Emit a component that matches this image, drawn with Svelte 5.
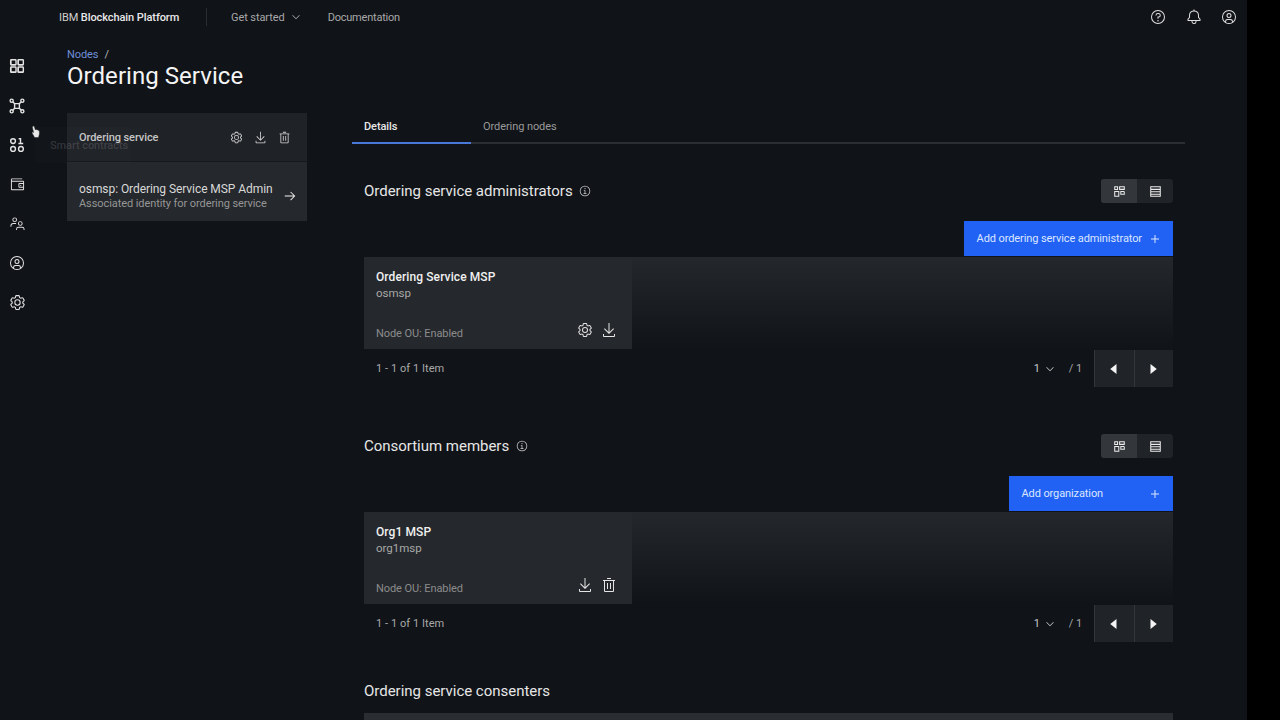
<script>
  const icons = {
    gear: ["M27,16.76c0-.25,0-.5,0-.76s0-.51,0-.77l1.92-1.68A2,2,0,0,0,29.3,11L26.94,7a2,2,0,0,0-1.73-1,2,2,0,0,0-.64.1l-2.43.82a11.35,11.35,0,0,0-1.31-.75l-.51-2.52a2,2,0,0,0-2-1.61H13.64a2,2,0,0,0-2,1.61l-.51,2.52a11.48,11.48,0,0,0-1.32.75L7.43,6.06A2,2,0,0,0,6.79,6,2,2,0,0,0,5.06,7L2.7,11a2,2,0,0,0,.41,2.51L5,15.24c0,.25,0,.5,0,.76s0,.51,0,.77L3.11,18.45A2,2,0,0,0,2.7,21L5.06,25a2,2,0,0,0,1.73,1,2,2,0,0,0,.64-.1l2.43-.82a11.35,11.35,0,0,0,1.31.75l.51,2.52a2,2,0,0,0,2,1.61h4.72a2,2,0,0,0,2-1.61l.51-2.52a11.48,11.48,0,0,0,1.32-.75l2.42.82a2,2,0,0,0,.64.1,2,2,0,0,0,1.73-1L29.3,21a2,2,0,0,0-.41-2.51ZM25.21,24l-3.43-1.16a8.86,8.86,0,0,1-2.71,1.57L18.36,28H13.64l-.71-3.55a9.36,9.36,0,0,1-2.7-1.57L6.79,24,4.43,20l2.72-2.4a8.9,8.9,0,0,1,0-3.13L4.43,12,6.79,8l3.43,1.16a8.86,8.86,0,0,1,2.71-1.57L13.64,4h4.72l.71,3.55a9.36,9.36,0,0,1,2.7,1.57L25.21,8,27.57,12l-2.72,2.4a8.9,8.9,0,0,1,0,3.13L27.57,20Z", "M16,22a6,6,0,1,1,6-6A5.94,5.94,0,0,1,16,22Zm0-10a3.91,3.91,0,0,0-4,4,3.91,3.91,0,0,0,4,4,3.91,3.91,0,0,0,4-4A3.91,3.91,0,0,0,16,12Z"],
    download: ["M26 24v4H6v-4H4v4a2 2 0 0 0 2 2h20a2 2 0 0 0 2-2v-4zM26 14l-1.41-1.41L17 20.17V2h-2v18.17l-7.59-7.58L6 14l10 10 10-10z"],
    trash: ["M12 12h2v12h-2zM18 12h2v12h-2zM4 6v2h2v20a2 2 0 0 0 2 2h16a2 2 0 0 0 2-2V8h2V6zm4 22V8h16v20zM12 2h8v2h-8z"],
    arrow: ["M18 6l-1.43 1.393L24.15 15H4v2h20.15l-7.58 7.573L18 26l10-10L18 6z"],
    add: ["M17 15V8h-2v7H8v2h7v7h2v-7h7v-2z"],
    chevron: ["M16 22L6 12l1.4-1.4 8.6 8.6 8.6-8.6L26 12z"],
    left: ["M20 24l-10-8 10-8z"],
    right: ["M12 8l10 8-10 8z"],
    help: ["M16 2a14 14 0 1 0 14 14A14 14 0 0 0 16 2zm0 26a12 12 0 1 1 12-12 12 12 0 0 1-12 12z", "M16 22a1.5 1.5 0 1 0 1.5 1.5A1.5 1.5 0 0 0 16 22z", "M17 8h-1.5a4.49 4.49 0 0 0-4.5 4.5v.5h2v-.5a2.5 2.5 0 0 1 2.5-2.5H17a2.5 2.5 0 0 1 0 5h-2v4.5h2V17a4.5 4.5 0 0 0 0-9z"],
    bell: ["M28.707 19.293L26 16.586V13a10.014 10.014 0 0 0-9-9.95V1h-2v2.05A10.014 10.014 0 0 0 6 13v3.586l-2.707 2.707A1 1 0 0 0 3 20v3a1 1 0 0 0 1 1h7v.777a5.152 5.152 0 0 0 4.5 5.199A5.006 5.006 0 0 0 21 25v-1h7a1 1 0 0 0 1-1v-3a1 1 0 0 0-.293-.707zM19 25a3 3 0 0 1-6 0v-1h6zm8-3H5v-1.586l2.707-2.707A1 1 0 0 0 8 17v-4a8 8 0 0 1 16 0v4a1 1 0 0 0 .293.707L27 20.414z"],
    user: ["M16 8a5 5 0 1 0 5 5 5 5 0 0 0-5-5zm0 8a3 3 0 1 1 3-3 3.003 3.003 0 0 1-3 3z", "M16 2a14 14 0 1 0 14 14A14.016 14.016 0 0 0 16 2zm-6 24.377V25a3.003 3.003 0 0 1 3-3h6a3.003 3.003 0 0 1 3 3v1.377a11.899 11.899 0 0 1-12 0zm13.993-1.451A5.002 5.002 0 0 0 19 20h-6a5.002 5.002 0 0 0-4.992 4.926 12 12 0 1 1 15.985 0z"],
    info: ["M17 22v-8h-4v2h2v6h-3v2h8v-2h-3z", "M16 8a1.5 1.5 0 1 0 1.5 1.5A1.5 1.5 0 0 0 16 8z", "M16 30a14 14 0 1 1 14-14 14 14 0 0 1-14 14zm0-26a12 12 0 1 0 12 12A12 12 0 0 0 16 4z"],
    wallet: ["M22 17h2v2h-2z", "M28 8H4V5h22V3H4a2 2 0 0 0-2 2v21a2 2 0 0 0 2 2h24a2 2 0 0 0 2-2V10a2 2 0 0 0-2-2zM4 26V10h24v3h-8a2 2 0 0 0-2 2v6a2 2 0 0 0 2 2h8v3zm24-11v6h-8v-6z"],
    grid: ["M6 3.500h7a2.500 2.500 0 0 1 2.500 2.500v7a2.500 2.500 0 0 1-2.500 2.500H6A2.500 2.500 0 0 1 3.500 13V6A2.500 2.500 0 0 1 6 3.500zm.5 2.500v6.500H13V6zM19 3.500h7A2.500 2.500 0 0 1 28.500 6v7a2.500 2.500 0 0 1-2.500 2.500h-7a2.500 2.500 0 0 1-2.500-2.500V6A2.500 2.500 0 0 1 19 3.500zm.5 2.500v6.500H26V6zM6 16.500h7a2.500 2.500 0 0 1 2.500 2.500v7a2.500 2.500 0 0 1-2.500 2.500H6A2.500 2.500 0 0 1 3.500 26v-7A2.500 2.500 0 0 1 6 16.500zm.5 2.500v6.500H13V19zM19 16.500h7a2.500 2.500 0 0 1 2.500 2.500v7a2.500 2.500 0 0 1-2.500 2.500h-7a2.500 2.500 0 0 1-2.500-2.500v-7a2.500 2.500 0 0 1 2.500-2.500zm.5 2.500v6.500H26V19z"],
    network: ["M10.500 10.500h11v11h-11zm2.500 2.500v6h6v-6z", "M6.500 2.500a4 4 0 1 1 0 8 4 4 0 0 1 0-8zm0 2.500a1.500 1.500 0 1 0 0 3 1.500 1.500 0 0 0 0-3zM25.500 2.500a4 4 0 1 1 0 8 4 4 0 0 1 0-8zm0 2.500a1.500 1.500 0 1 0 0 3 1.500 1.500 0 0 0 0-3zM6.500 21.500a4 4 0 1 1 0 8 4 4 0 0 1 0-8zm0 2.500a1.500 1.500 0 1 0 0 3 1.500 1.500 0 0 0 0-3zM25.500 21.500a4 4 0 1 1 0 8 4 4 0 0 1 0-8zm0 2.500a1.500 1.500 0 1 0 0 3 1.500 1.500 0 0 0 0-3z", "M9.300 7.500l3.500 3.500-1.800 1.800-3.500-3.500zM22.700 7.500l1.800 1.800-3.500 3.500-1.800-1.800zM11 19.200l1.800 1.800-3.500 3.500-1.800-1.800zM21 19.200l3.500 3.500-1.800 1.800-3.500-3.500z"],
    apps: ["M9 3.500a5.500 5.500 0 1 1 0 11 5.500 5.500 0 0 1 0-11zm0 2.500a3 3 0 1 0 0 6 3 3 0 0 0 0-6zM9 17.500a5.500 5.500 0 1 1 0 11 5.500 5.500 0 0 1 0-11zm0 2.500a3 3 0 1 0 0 6 3 3 0 0 0 0-6zM23 17.500a5.500 5.500 0 1 1 0 11 5.500 5.500 0 0 1 0-11zm0 2.500a3 3 0 1 0 0 6 3 3 0 0 0 0-6z", "M19 3.500h4.500v8.500H27v2.500h-8.500V12h2.500V6H19z"],
    users: ["M10 3a5 5 0 1 1 0 10 5 5 0 0 1 0-10zm0 2a3 3 0 1 0 0 6 3 3 0 0 0 0-6zM1 23v-2a6 6 0 0 1 6-6h6v2H7a4 4 0 0 0-4 4v2zM22 11a5 5 0 1 1 0 10 5 5 0 0 1 0-10zm0 2a3 3 0 1 0 0 6 3 3 0 0 0 0-6zM13 30v-2a5 5 0 0 1 5-5h8a5 5 0 0 1 5 5v2h-2v-2a3 3 0 0 0-3-3h-8a3 3 0 0 0-3 3v2z"],
    tiles: ["M3 3h9.500v9.500H3zm2.500 2.500V10h4.500V5.500zM15 3h14v9H15zm2.500 2.500v4h9v-4zM3 15h12.500v14H3zm2.500 2.500v9H13v-9zM18 15h8a3 3 0 0 1 3 3v6H18zm2.500 2.500v4h6V18a.5.5 0 0 0-.5-.5z"],
    table: ["M3 3h26v26H3zm2.500 2.500v4h21v-4zm0 6.500v3.500h21V12zm0 6v3.500h21V18zm0 6v2.500h21V24z"]
  };
  const railIcons = [["grid", 18], ["network", 18], ["apps", 18], ["wallet", 15], ["users", 15], ["user", 16], ["gear", 17]];
  const sections = [
    { title: "Ordering service administrators", button: "Add ordering service administrator", name: "Ordering Service MSP", id: "osmsp", actions: ["gear", "download"] },
    { title: "Consortium members", button: "Add organization", name: "Org1 MSP", id: "org1msp", actions: ["download", "trash"] }
  ];
</script>

{#snippet icon(name, size)}
  <svg class="ico" viewBox="0 0 32 32" width={size} height={size} fill="currentColor" aria-hidden="true">
    {#each icons[name] as d}<path {d} />{/each}
  </svg>
{/snippet}

<div class="app">
  <header class="top">
    <div class="brand">IBM <b>Blockchain Platform</b></div>
    <span class="sep"></span>
    <nav class="nav">
      <span class="nav-item">Get started {@render icon("chevron", 12)}</span>
      <span class="nav-item doc">Documentation</span>
    </nav>
    <div class="top-actions">
      {@render icon("help", 16)}
      {@render icon("bell", 16)}
      {@render icon("user", 16)}
    </div>
  </header>

  <div class="layout">
    <aside class="rail">
      {#each railIcons as [r, size]}
        <span class="rail-item"><span class="rail-box">{@render icon(r, size)}</span></span>
      {/each}
    </aside>

    <div class="content">
      <div class="crumbs"><span class="link">Nodes</span><span class="slash">/</span></div>
      <h1>Ordering Service</h1>

      <div class="columns">
        <div class="panel">
          <div class="panel-head">
            <span class="panel-title">Ordering service</span>
            <span class="panel-actions">
              {@render icon("gear", 13)}
              {@render icon("download", 13)}
              {@render icon("trash", 13)}
            </span>
          </div>
          <div class="panel-body">
            <div>
              <div class="panel-name">osmsp: Ordering Service MSP Admin</div>
              <div class="panel-sub">Associated identity for ordering service</div>
            </div>
            {@render icon("arrow", 14)}
          </div>
        </div>

        <main class="main">
          <div class="tabs">
            <span class="tab active">Details</span>
            <span class="tab">Ordering nodes</span>
          </div>

          {#each sections as s}
            <section class="section">
              <div class="sec-head">
                <h2>{s.title}</h2>
                {@render icon("info", 12)}
                <div class="toggle">
                  <span class="tog on">{@render icon("tiles", 13)}</span>
                  <span class="tog">{@render icon("table", 13)}</span>
                </div>
              </div>
              <div class="btn-row">
                <span class="btn">{s.button}{@render icon("add", 16)}</span>
              </div>
              <div class="cards">
                <div class="card">
                  <div class="card-name">{s.name}</div>
                  <div class="card-id">{s.id}</div>
                  <div class="card-foot">
                    <span class="ou">Node OU: Enabled</span>
                    <span class="card-actions">
                      {#each s.actions as a}{@render icon(a, 16)}{/each}
                    </span>
                  </div>
                </div>
              </div>
              <div class="pager">
                <span class="count">1 - 1 of 1 Item</span>
                <span class="page">1 {@render icon("chevron", 12)}</span>
                <span class="of">/ 1</span>
                <span class="pg-btn">{@render icon("left", 20)}</span>
                <span class="pg-btn">{@render icon("right", 20)}</span>
              </div>
            </section>
          {/each}

          <section class="section last">
            <div class="sec-head"><h2>Ordering service consenters</h2></div>
            <div class="stub"></div>
          </section>
        </main>
      </div>
    </div>
  </div>

  <div class="tooltip">Smart contracts</div>
  <svg class="cursor" viewBox="0 0 12 14" width="12" height="14" aria-hidden="true">
    <path d="M3 1.200c.7-.4 1.300 0 1.500.7l.9 3 .3-.5c.5-.2 1 0 1.100.5.5-.3 1-.1 1.200.4.5-.2 1 0 1.200.5.4 1.400.4 3.300-.3 5.200l-.4 1.500H4.600L2.200 8.300C1.800 7.700 2 7.100 2.600 7l1 .5L2.400 2.600C2.300 2 2.500 1.500 3 1.200z" fill="#e8e8e8" stroke="#222" stroke-width=".5"/>
  </svg>
</div>

<style>
  :global(body) { margin: 0; background: #000; }
  .app {
    position: relative;
    width: 1247px;
    height: 720px;
    overflow: hidden;
    background: #101318;
    color: #f4f4f4;
    font-family: "Roboto", "Liberation Sans", sans-serif;
    font-size: 11px;
    letter-spacing: -0.08px;
  }
  .ico { display: block; flex: none; }
  .top { display: flex; align-items: center; height: 34px; padding-left: 59px; color: #c6c6c6; }
  .brand { width: 147px; color: #d0d0d0; }
  .brand b { font-weight: 500; color: #e8e8e8; }
  .sep { width: 1px; height: 18px; background: #2a2d32; }
  .nav { display: flex; align-items: center; margin-left: 24px; color: #a8a8a8; }
  .nav-item { display: flex; align-items: center; gap: 5px; }
  .doc { margin-left: 26px; letter-spacing: -0.22px; }
  .top-actions { margin-left: auto; margin-right: 10px; display: flex; gap: 19.500px; color: #e0e0e0; }

  .layout { display: flex; }
  .rail { width: 67px; padding-top: 12.500px; flex: none; display: flex; flex-direction: column; }
  .rail-item { height: 39.400px; padding-left: 7.500px; display: flex; align-items: center; color: #e4e4e4; }
  .rail-box { width: 19px; display: flex; justify-content: center; }
  .content { flex: 1; min-width: 0; }
  .crumbs { display: flex; gap: 6px; height: 19px; padding-top: 14px; line-height: 14px; }
  .link { color: #6f8fd8; }
  .slash { color: #bbb; }
  h1 { margin: 0; font-weight: 400; font-size: 24px; line-height: 28px; height: 51px; margin-top: -5px; color: #f4f4f4; letter-spacing: 0.05px; }
  .columns { display: flex; gap: 45px; }
  .panel { width: 240px; flex: none; height: 108px; }
  .panel-head { height: 49px; box-sizing: border-box; padding: 0 16.500px 0 12px; display: flex; align-items: center; justify-content: space-between; background: #1f2227; border-bottom: 1px solid #15181c; }
  .panel-title { font-weight: 500; color: #c6c6c6; }
  .panel-actions { display: flex; gap: 11px; color: #d8d8d8; }
  .panel-body { height: 59px; box-sizing: border-box; padding: 8px 10px 0 12px; display: flex; align-items: center; justify-content: space-between; background: #25282c; }
  .panel-name { font-size: 12px; letter-spacing: -0.07px; color: #d8d8d8; line-height: 16px; white-space: nowrap; }
  .panel-sub { color: #969696; line-height: 14px; white-space: nowrap; }

  .main { width: 833px; flex: none; }
  .tabs { display: flex; height: 31px; box-sizing: border-box; border-bottom: 2px solid #2b2e33; }
  .tab { width: 119px; height: 31px; box-sizing: border-box; padding: 7px 0 0 12px; color: #9a9a9a; }
  .tab.active { color: #e8e8e8; font-weight: 500; border-bottom: 2px solid #4a78d8; }

  .section { padding: 0 12px; margin-bottom: 47px; }
  .sec-head { display: flex; align-items: center; gap: 6.500px; height: 24px; padding-top: 35px; }
  .section + .section .sec-head { padding-top: 0; }
  h2 { margin: 0; font-weight: 400; font-size: 15px; color: #e6e6e6; letter-spacing: -0.02px; }
  .sec-head .ico { color: #cfcfcf; }
  .toggle { margin-left: auto; display: flex; border-radius: 3px; overflow: hidden; background: #202328; }
  .tog { width: 36px; height: 24px; display: flex; align-items: center; justify-content: center; }
  .sec-head .tog .ico { color: #ececec; }
  .tog.on { background: #33363b; }
  .btn-row { display: flex; justify-content: flex-end; margin-top: 18px; }
  .btn { height: 35px; min-width: 164px; box-sizing: border-box; display: flex; align-items: center; justify-content: space-between; gap: 5px; padding: 0 10px 0 12.500px; letter-spacing: -0.1px; background: #2162f5; color: #dbe6ff; }
  .cards { margin-top: 1px; height: 92px; background: linear-gradient(#24272c, #101318); }
  .card { width: 268px; height: 92px; box-sizing: border-box; padding: 12px 12px 0; background: #25282c; }
  .card-name { font-size: 12px; font-weight: 500; letter-spacing: 0.1px; color: #f0f0f0; line-height: 16px; }
  .card-id { color: #a8a8a8; font-size: 11.500px; letter-spacing: 0; line-height: 17px; }
  .card-foot { display: flex; justify-content: space-between; align-items: flex-end; margin-top: 20px; }
  .ou { color: #8c8c8c; line-height: 14px; }
  .card-actions { display: flex; gap: 8px; color: #e4e4e4; margin-right: 3px; margin-bottom: 3px; }
  .pager { display: flex; align-items: center; height: 37px; padding-left: 12px; margin-top: 1px; color: #a8a8a8; }
  .count { margin-right: auto; letter-spacing: 0.06px; }
  .page { display: flex; align-items: center; gap: 4px; margin-right: 13px; color: #c6c6c6; }
  .of { margin-right: 12px; }
  .pg-btn { width: 39.500px; height: 37px; display: flex; align-items: center; justify-content: center; background: #202328; color: #f4f4f4; border-left: 1px solid #33363b; box-sizing: border-box; }
  .pg-btn:last-child { padding-right: 1px; }
  .last { margin: -10px 0 0; }
  .stub { margin-top: 10px; height: 20px; background: #2a2d32; }

  .tooltip { position: absolute; left: 35px; top: 127px; width: 96px; height: 36px; box-sizing: border-box; padding: 12px 0 0 15px; background: rgba(255,255,255,0.012); color: rgba(255,255,255,0.14); font-weight: 500; white-space: nowrap; }
  .cursor { position: absolute; left: 30px; top: 125px; }
</style>
